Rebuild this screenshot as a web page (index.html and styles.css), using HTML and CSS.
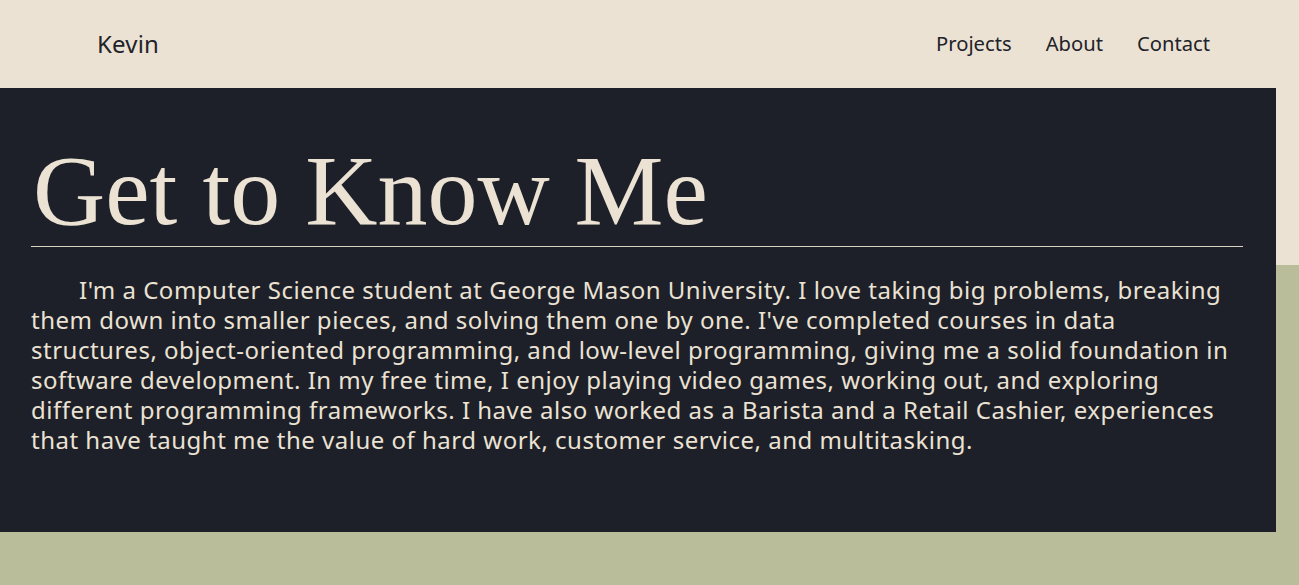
FILE: index.html
```html
<!DOCTYPE html>
<html lang="en">
<head>
<meta charset="utf-8">
<title>Kevin</title>
<link rel="stylesheet" href="styles.css">
</head>
<body>
<header class="site-header">
  <a class="brand" href="#">Kevin</a>
  <nav class="nav">
    <a href="#">Projects</a>
    <a href="#">About</a>
    <a href="#">Contact</a>
  </nav>
</header>
<main class="about">
  <h1 class="about-title">Get to Know Me</h1>
  <p class="about-text">I'm a Computer Science student at George Mason University. I love taking big problems, breaking them down into smaller pieces, and solving them one by one. I've completed courses in data structures, object-oriented programming, and low-level programming, giving me a solid foundation in software development. In my free time, I enjoy playing video games, working out, and exploring different programming frameworks. I have also worked as a Barista and a Retail Cashier, experiences that have taught me the value of hard work, customer service, and multitasking.</p>
</main>
</body>
</html>
```
FILE: styles.css
```css
* { box-sizing: border-box; }
html, body { margin: 0; padding: 0; }
body {
  min-height: 100vh;
  background: linear-gradient(to bottom, #ebe2d4 0, #ebe2d4 265px, #babd99 265px, #babd99 100%);
  font-family: "Noto Sans", "Open Sans", sans-serif;
}
.site-header {
  height: 88px;
  background: #ebe2d4;
  display: flex;
  align-items: center;
  justify-content: space-between;
  padding: 0 89px 2px 97px;
}
.brand {
  font-size: 24px;
  letter-spacing: 0.2px;
  color: #222329;
  text-decoration: none;
}
.nav {
  display: flex;
  gap: 34px;
}
.nav a {
  font-size: 20.2px;
  color: #222329;
  text-decoration: none;
}
.about {
  background: #1d2028;
  margin-right: 23px;
  padding: 48px 33px 77px 31px;
  color: #ebe2d4;
}
.about-title {
  margin: 0;
  font-family: "Liberation Serif", "Times New Roman", serif;
  font-weight: 400;
  font-size: 100px;
  line-height: 110px;
  height: 111px;
  border-bottom: 1px solid #d9d1c4;
  padding-left: 2px;
}
.about-text {
  margin: 28px 0 0 0;
  font-size: 24px;
  letter-spacing: 0.5px;
  line-height: 30px;
  text-indent: 48px;
}
```
